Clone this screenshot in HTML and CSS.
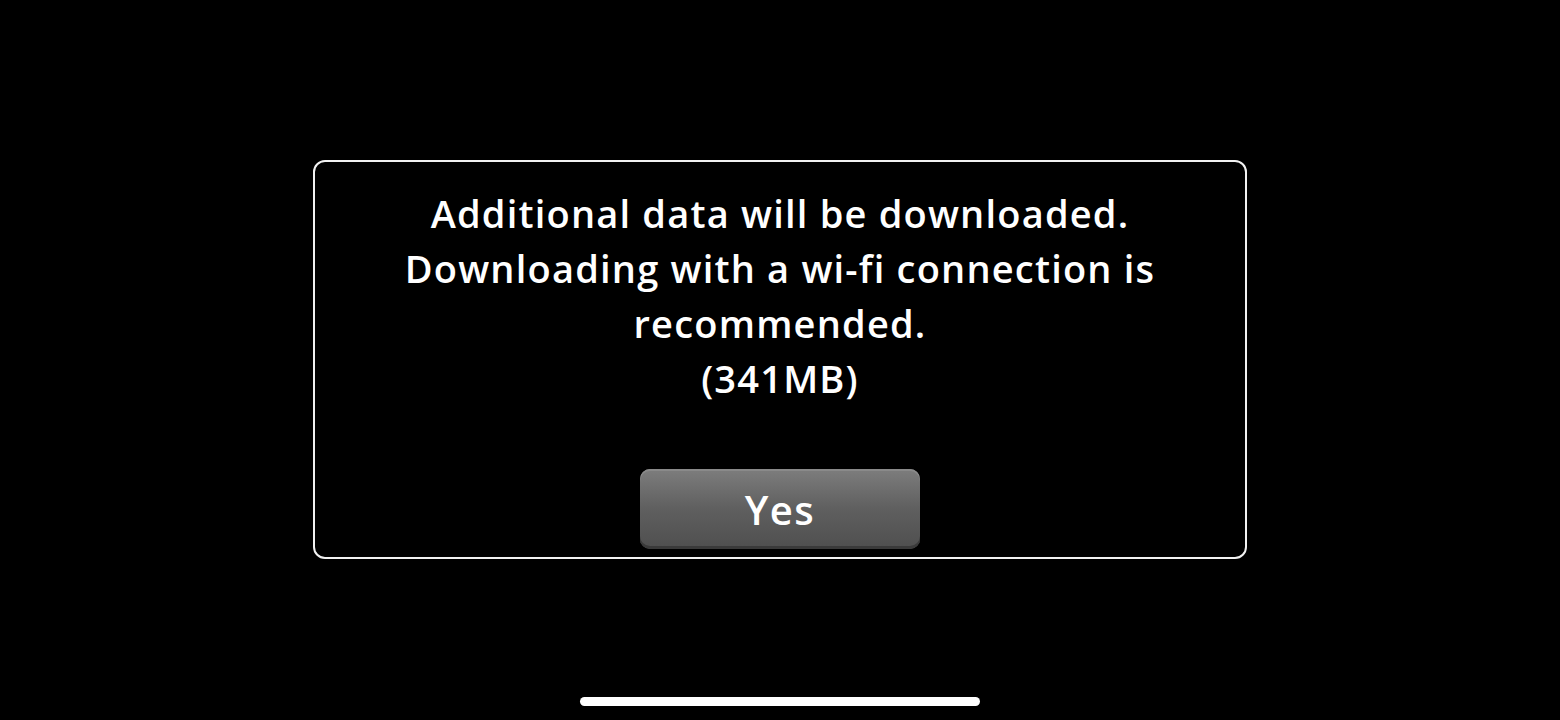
FILE: index.html
```html
<!DOCTYPE html>
<html lang="en">
	<head>
		<meta charset="UTF-8" />
		<meta name="viewport" content="width=device-width, initial-scale=1.0" />
		<title>Download</title>
		<link rel="stylesheet" href="styles.css">
	</head>
	<body>
		<div class="screen">
			<div class="dialog">
				<p class="dialog__text">
					Additional data will be downloaded.<br>
					Downloading with a wi-fi connection is<br>
					recommended.<br>
					(341MB)
				</p>
				<button class="dialog__button">Yes</button>
			</div>
			<div class="home-bar"></div>
		</div>
	</body>
</html>
```

FILE: styles.css
```css
* {
	margin: 0;
	box-sizing: border-box;
}

body {
	background: #000;
	font-family: "Open Sans", "Noto Sans", sans-serif;
	color: #fff;
}

.screen {
	width: 1560px;
	height: 720px;
	display: flex;
	flex-direction: column;
	align-items: center;
	padding-top: 160px;
}

.dialog {
	width: 934px;
	height: 399px;
	border: 2px solid #f2f2f2;
	border-radius: 12px;
	display: flex;
	flex-direction: column;
	align-items: center;
	padding-top: 24px;
}

.dialog__text {
	font-size: 38px;
	font-weight: 600;
	line-height: 55px;
	text-align: center;
	letter-spacing: 1.2px;
}

.dialog__button {
	margin-top: auto;
	margin-bottom: 8px;
	width: 280px;
	height: 80px;
	border: none;
	border-radius: 10px;
	background: linear-gradient(#7d7d7d, #5f5f5f 50%, #4f4f4f);
	box-shadow: inset 0 -3px 0 #3a3a3a, inset 0 2px 0 #8a8a8a;
	font-family: inherit;
	font-size: 40px;
	font-weight: 600;
	letter-spacing: 1.5px;
	color: #fff;
	padding-top: 2px;
}

.home-bar {
	margin-top: auto;
	margin-bottom: 14px;
	width: 400px;
	height: 9px;
	border-radius: 5px;
	background: #fff;
}
```
